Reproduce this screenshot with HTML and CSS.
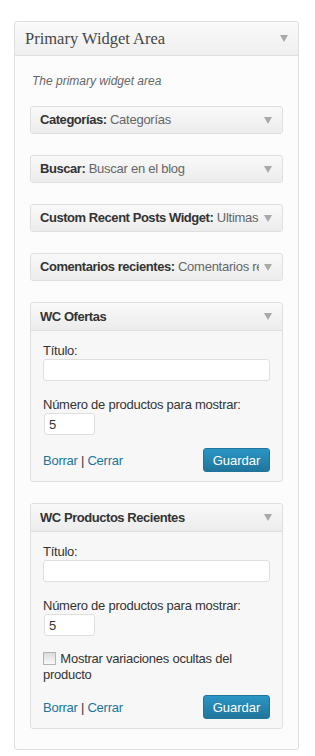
FILE: index.html
```html
<!DOCTYPE html>
<html lang="es">
<head>
    <meta charset="UTF-8">
    <meta name="viewport" content="width=device-width, initial-scale=1.0">
    <title>Primary Widget Area</title>
    <link rel="stylesheet" href="styles.css">
</head>
<body>
    <div class="sidebar">
        <div class="sidebar-head">
            <h3>Primary Widget Area</h3>
            <span class="arrow"><svg width="8" height="7" viewBox="0 0 8 7"><path d="M0 0H8L4 7Z" fill="#a9a9a9"/></svg></span>
        </div>
        <div class="sidebar-body">
            <p class="description">The primary widget area</p>

            <div class="widget">
                <div class="widget-top">
                    <span class="widget-title"><b>Categorías:</b> Categorías</span>
                    <span class="arrow"><svg width="8" height="7" viewBox="0 0 8 7"><path d="M0 0H8L4 7Z" fill="#a9a9a9"/></svg></span>
                </div>
            </div>

            <div class="widget">
                <div class="widget-top">
                    <span class="widget-title"><b>Buscar:</b> Buscar en el blog</span>
                    <span class="arrow"><svg width="8" height="7" viewBox="0 0 8 7"><path d="M0 0H8L4 7Z" fill="#a9a9a9"/></svg></span>
                </div>
            </div>

            <div class="widget">
                <div class="widget-top">
                    <span class="widget-title"><b>Custom Recent Posts Widget:</b> Ultimas Entradas</span>
                    <span class="arrow"><svg width="8" height="7" viewBox="0 0 8 7"><path d="M0 0H8L4 7Z" fill="#a9a9a9"/></svg></span>
                </div>
            </div>

            <div class="widget">
                <div class="widget-top">
                    <span class="widget-title"><b>Comentarios recientes:</b> Comentarios recientes</span>
                    <span class="arrow"><svg width="8" height="7" viewBox="0 0 8 7"><path d="M0 0H8L4 7Z" fill="#a9a9a9"/></svg></span>
                </div>
            </div>

            <div class="widget open">
                <div class="widget-top">
                    <span class="widget-title"><b>WC Ofertas</b></span>
                    <span class="arrow"><svg width="8" height="7" viewBox="0 0 8 7"><path d="M0 0H8L4 7Z" fill="#a9a9a9"/></svg></span>
                </div>
                <div class="widget-inside">
                    <label class="field-label">Título:</label>
                    <input type="text" class="text-input">
                    <label class="field-label spaced">Número de productos para mostrar:</label>
                    <input type="text" class="num-input" value="5">
                    <div class="widget-actions">
                        <span class="links"><a href="#">Borrar</a> | <a href="#">Cerrar</a></span>
                        <button class="save-btn">Guardar</button>
                    </div>
                </div>
            </div>

            <div class="widget open">
                <div class="widget-top">
                    <span class="widget-title"><b>WC Productos Recientes</b></span>
                    <span class="arrow"><svg width="8" height="7" viewBox="0 0 8 7"><path d="M0 0H8L4 7Z" fill="#a9a9a9"/></svg></span>
                </div>
                <div class="widget-inside">
                    <label class="field-label">Título:</label>
                    <input type="text" class="text-input">
                    <label class="field-label spaced">Número de productos para mostrar:</label>
                    <input type="text" class="num-input" value="5">
                    <label class="check-row"><input type="checkbox" class="check"> Mostrar variaciones ocultas del producto</label>
                    <div class="widget-actions tight">
                        <span class="links"><a href="#">Borrar</a> | <a href="#">Cerrar</a></span>
                        <button class="save-btn">Guardar</button>
                    </div>
                </div>
            </div>
        </div>
    </div>
</body>
</html>
```

FILE: styles.css
```css
body {
    margin: 0;
    padding: 21px 17px 0 14px;
    background: #fff;
    font-family: 'Liberation Sans', Arial, sans-serif;
    font-size: 13px;
    letter-spacing: -0.25px;
    color: #333;
}
.sidebar {
    width: 283px;
    border: 1px solid #dfdfdf;
    border-radius: 3px;
    background: #fcfcfc;
}
.sidebar-head {
    height: 33px;
    display: flex;
    align-items: center;
    justify-content: space-between;
    padding: 0 10px;
    border-bottom: 1px solid #dfdfdf;
    background: linear-gradient(to bottom, #fafafa, #efefef);
    border-radius: 3px 3px 0 0;
}
.sidebar-head h3 {
    margin: 0;
    font-family: 'Liberation Serif', 'Times New Roman', serif;
    font-weight: normal;
    font-size: 16.5px;
    letter-spacing: 0;
    color: #464646;
    padding-top: 1px;
}
.arrow {
    display: flex;
    flex-shrink: 0;
}
.sidebar-body {
    padding: 0 15px 20px;
}
.description {
    margin: 18px 2px 17px;
    font-size: 12px;
    line-height: 15px;
    letter-spacing: 0;
    font-style: italic;
    color: #666;
}
.widget {
    border: 1px solid #dfdfdf;
    border-radius: 3px;
    margin-bottom: 21px;
    background: #f7f7f7;
}
.widget:last-child {
    margin-bottom: 0;
}
.widget-top {
    height: 26px;
    display: flex;
    align-items: center;
    justify-content: space-between;
    padding: 0 10px 0 9px;
    background: linear-gradient(to bottom, #f9f9f9, #ececec);
    border-radius: 3px;
}
.widget.open .widget-top {
    height: 27px;
    border-bottom: 1px solid #dfdfdf;
    border-radius: 3px 3px 0 0;
}
.widget-title {
    white-space: nowrap;
    overflow: hidden;
    flex: 1;
    margin-right: 5px;
    color: #666;
    line-height: 16px;
}
.widget-title b {
    color: #333;
    letter-spacing: -0.45px;
}
.widget-inside {
    padding: 12px 12px 9px;
    display: flex;
    flex-direction: column;
    align-items: flex-start;
}
.field-label {
    line-height: 16px;
    color: #333;
}
.field-label.spaced {
    margin-top: 16px;
}
.text-input, .num-input {
    box-sizing: border-box;
    height: 22px;
    border: 1px solid #dfdfdf;
    border-radius: 3px;
    background: #fff;
    font-family: inherit;
    font-size: 13px;
    color: #333;
    padding: 0 4px;
    margin: 0;
    outline: none;
}
.text-input {
    width: 100%;
}
.num-input {
    width: 51px;
    margin-left: 1px;
}
.check-row {
    margin-top: 15px;
    line-height: 16px;
    color: #333;
}
.check {
    appearance: none;
    -webkit-appearance: none;
    width: 13px;
    height: 13px;
    margin: 0 1px 0 0;
    vertical-align: -2px;
    border: 1px solid #b4b4b4;
    background: linear-gradient(to bottom, #dcdcdc, #f8f8f8);
    box-sizing: border-box;
}
.widget-actions {
    align-self: stretch;
    display: flex;
    align-items: center;
    justify-content: space-between;
    margin-top: 13px;
}
.widget-actions.tight {
    margin-top: 12px;
}
.links {
    color: #333;
}
.links a {
    color: #21759b;
    text-decoration: none;
}
.save-btn {
    width: 67px;
    height: 24px;
    border: 1px solid #21759b;
    border-radius: 3px;
    background: linear-gradient(to bottom, #2a95c5, #21759b);
    color: #fff;
    font-family: inherit;
    font-size: 13px;
    letter-spacing: 0;
    padding: 0;
    cursor: pointer;
}
```
